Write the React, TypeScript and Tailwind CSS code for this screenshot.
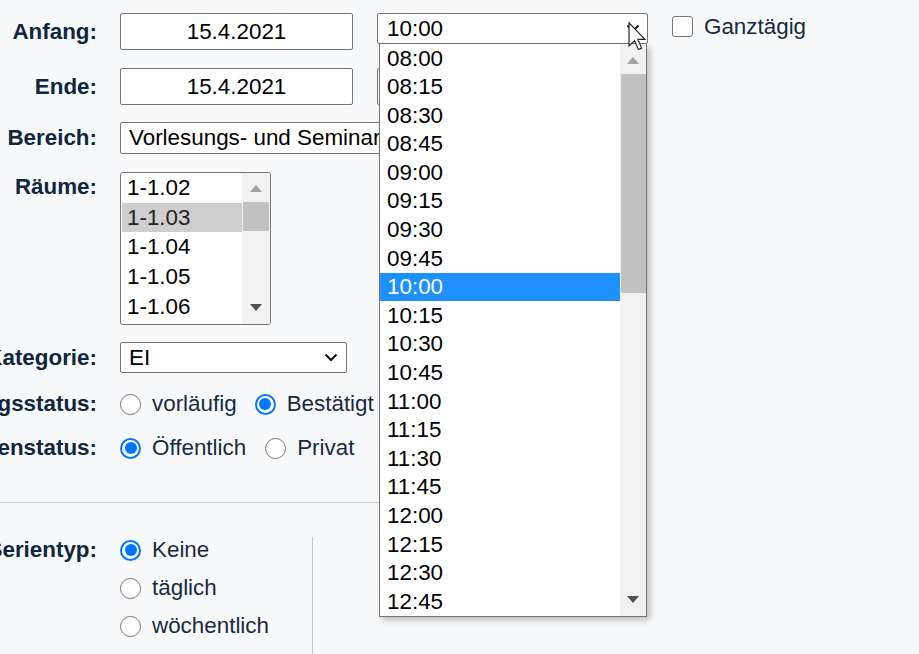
import React from 'react';

const FONT = { fontFamily: '"Liberation Sans", Arial, sans-serif' };

const times = [
  '08:00', '08:15', '08:30', '08:45', '09:00', '09:15', '09:30', '09:45', '10:00', '10:15',
  '10:30', '10:45', '11:00', '11:15', '11:30', '11:45', '12:00', '12:15', '12:30', '12:45',
];

const rooms = ['1-1.02', '1-1.03', '1-1.04', '1-1.05', '1-1.06'];

function Label({ children }: { children: React.ReactNode }) {
  return (
    <div className="w-[97px] shrink-0 flex justify-end whitespace-nowrap font-bold text-[22.4px] leading-[26px] text-[#10263d]">
      {children}
    </div>
  );
}

function Chevron() {
  return (
    <svg width="14" height="9" viewBox="0 0 14 9" className="shrink-0">
      <path d="M1.5 1.5 L7 7 L12.5 1.5" fill="none" stroke="#111" strokeWidth="2" />
    </svg>
  );
}

function TriUp({ color }: { color: string }) {
  return (
    <svg width="12" height="7" viewBox="0 0 12 7">
      <polygon points="0,7 6,0 12,7" fill={color} />
    </svg>
  );
}

function TriDown({ color }: { color: string }) {
  return (
    <svg width="12" height="7" viewBox="0 0 12 7">
      <polygon points="0,0 12,0 6,7" fill={color} />
    </svg>
  );
}

function Radio({ checked, label }: { checked?: boolean; label: string }) {
  return (
    <div className="flex items-center h-[26px]">
      {checked ? (
        <span className="w-[21px] h-[21px] rounded-full border-2 border-[#0075ff] bg-white flex items-center justify-center">
          <span className="w-[12px] h-[12px] rounded-full bg-[#0075ff]" />
        </span>
      ) : (
        <span className="w-[21px] h-[21px] rounded-full border border-[#767676] bg-white" />
      )}
      <span className="ml-[11px] text-[22.4px] text-[#172a3e] whitespace-nowrap">{label}</span>
    </div>
  );
}

function DateInput({ value }: { value: string }) {
  return (
    <div className="w-[233px] h-[37px] shrink-0 bg-white border border-[#767676] rounded-[2px] flex items-center justify-center text-[22.4px] text-black">
      {value}
    </div>
  );
}

function Cursor() {
  return (
    <svg width="18" height="29" viewBox="0 0 12 20" className="absolute left-[628px] top-[22px]">
      <path d="M0.5 0.5 L0.5 16.5 L4.3 12.9 L7 19 L9.2 18 L6.6 12 L11.5 12 Z" fill="#fff" stroke="#222" strokeWidth="0.8" />
    </svg>
  );
}

export default function App() {
  return (
    <div className="relative h-screen w-full overflow-hidden bg-[#f8f9fb]" style={FONT}>
      <div className="pt-[13px]">
        {/* Anfang */}
        <div className="flex items-start">
          <div className="h-[37px] flex items-center"><Label>Anfang:</Label></div>
          <div className="ml-[23px]"><DateInput value="15.4.2021" /></div>
          <div className="ml-[24px] w-[271px] h-[31px] bg-white border border-[#767676] rounded-[2px] flex items-center justify-between pl-[9px] pr-[7px] text-[22.4px] text-black">
            <span>10:00</span>
            <Chevron />
          </div>
          <div className="ml-[24px] mt-[3px] flex items-center h-[21px]">
            <span className="w-[21px] h-[21px] rounded-[3px] border border-[#767676] bg-white" />
            <span className="ml-[11px] text-[22.4px] text-[#172a3e]">Ganztägig</span>
          </div>
        </div>

        {/* Ende */}
        <div className="flex items-center mt-[18px]">
          <Label>Ende:</Label>
          <div className="ml-[23px]"><DateInput value="15.4.2021" /></div>
          <div className="ml-[24px] w-[200px] h-[37px] bg-white border border-[#767676] rounded-[2px]" />
        </div>

        {/* Bereich */}
        <div className="flex items-center mt-[17px]">
          <Label>Bereich:</Label>
          <div className="ml-[23px] w-[420px] h-[32px] bg-white border border-[#767676] rounded-[2px] flex items-center pl-[8px] text-[22.4px] text-black whitespace-nowrap overflow-hidden">
            Vorlesungs- und Seminarräume
          </div>
        </div>

        {/* Räume */}
        <div className="flex items-start mt-[18px]">
          <div className="pt-[2px]"><Label>Räume:</Label></div>
          <div className="ml-[23px] w-[151px] h-[153px] bg-white border border-[#767676] rounded-[3px] flex overflow-hidden">
            <div className="w-[121px] pt-0 pl-[1px]">
              {rooms.map((r, i) => (
                <div
                  key={r}
                  className={`h-[29.7px] flex items-center pl-[5px] text-[22.4px] ${i === 1 ? 'bg-[#cecece] text-[#222]' : 'text-black'}`}
                >
                  {r}
                </div>
              ))}
            </div>
            <div className="flex-1 bg-[#f1f1f1] flex flex-col">
              <div className="h-[29px] flex items-center justify-center pt-[2px]"><TriUp color="#a3a3a3" /></div>
              <div className="ml-[1px] mr-[1px] h-[29px] bg-[#c1c1c1]" />
              <div className="flex-1" />
              <div className="h-[34px] flex items-center justify-center"><TriDown color="#505050" /></div>
            </div>
          </div>
        </div>

        {/* Kategorie */}
        <div className="flex items-center mt-[17px]">
          <Label>Kategorie:</Label>
          <div className="ml-[23px] w-[227px] h-[31px] bg-white border border-[#767676] rounded-[2px] flex items-center justify-between pl-[8px] pr-[8px] text-[22.4px] text-black">
            <span>EI</span>
            <Chevron />
          </div>
        </div>

        {/* Buchungsstatus */}
        <div className="flex items-center mt-[18px]">
          <Label>Buchungsstatus:</Label>
          <div className="ml-[23px] flex items-center gap-[18px]">
            <Radio label="vorläufig" />
            <Radio checked label="Bestätigt" />
          </div>
        </div>

        {/* Datenstatus */}
        <div className="flex items-center mt-[18px]">
          <Label>Datenstatus:</Label>
          <div className="ml-[23px] flex items-center gap-[19px]">
            <Radio checked label="Öffentlich" />
            <Radio label="Privat" />
          </div>
        </div>

        <div className="mt-[41px] h-px w-[600px] bg-[#c8ccd0]" />

        {/* Serientyp */}
        <div className="flex items-start mt-[34px]">
          <div className="h-[26px] flex items-center"><Label>Serientyp:</Label></div>
          <div className="ml-[23px] w-[192px] flex flex-col gap-[12px]">
            <Radio checked label="Keine" />
            <Radio label="täglich" />
            <Radio label="wöchentlich" />
            <Radio label="monatlich" />
            <Radio label="jährlich" />
          </div>
          <div className="w-[200px] h-[220px] border-l border-[#c8c8c8]" />
        </div>
      </div>

      {/* open time dropdown */}
      <div className="absolute left-[379px] top-[44px] w-[268px] h-[573px] bg-white border-x border-b border-[#767676] shadow-[3px_3px_6px_rgba(0,0,0,0.25)] flex">
        <div className="w-[240px]">
          {times.map((t) => (
            <div
              key={t}
              className={`h-[28.6px] flex items-center pl-[7px] text-[22.4px] ${t === '10:00' ? 'bg-[#1e90ff] text-white' : 'text-black'}`}
            >
              {t}
            </div>
          ))}
        </div>
        <div className="flex-1 bg-[#f1f1f1] flex flex-col">
          <div className="h-[30px] flex items-center justify-center pt-[2px]"><TriUp color="#a3a3a3" /></div>
          <div className="ml-[1px] h-[219px] bg-[#c1c1c1]" />
          <div className="flex-1" />
          <div className="h-[34px] flex items-center justify-center"><TriDown color="#505050" /></div>
        </div>
      </div>

      <Cursor />
    </div>
  );
}
